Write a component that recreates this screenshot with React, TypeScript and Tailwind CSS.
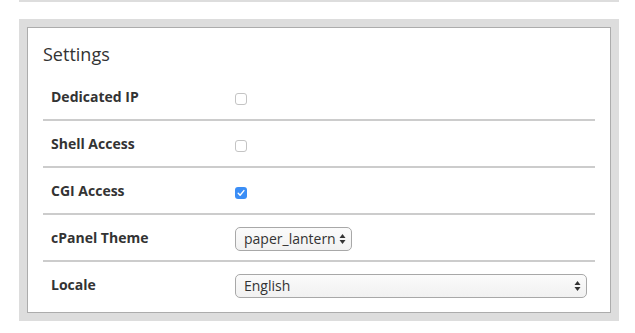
import type { ReactNode } from 'react';

const FONT = { fontFamily: '"Open Sans", "Liberation Sans", sans-serif' };

function Checkbox({ checked }: { checked?: boolean }) {
  if (checked) {
    return (
      <span className="mt-[4px] flex h-[12px] w-[12px] items-center justify-center rounded-[3px] bg-[#3b8ef6]">
        <svg viewBox="0 0 12 12" className="h-[12px] w-[12px]">
          <path d="M3.2 6.3 L5.1 8.3 L8.9 3.6" fill="none" stroke="#fff" strokeWidth="1.4" strokeLinecap="round" strokeLinejoin="round" />
        </svg>
      </span>
    );
  }
  return <span className="mt-[4px] block h-[12px] w-[12px] rounded-[3px] border border-[#c4c4c4] bg-white" />;
}

function Arrows() {
  return (
    <svg viewBox="0 0 7 12" className="h-[12px] w-[7px]">
      <path d="M3.5 1 L6.5 5 L0.5 5 Z" fill="#333" />
      <path d="M3.5 11 L6.5 7 L0.5 7 Z" fill="#333" />
    </svg>
  );
}

function FakeSelect({ value, wide }: { value: string; wide?: boolean }) {
  return (
    <div
      className={`mt-[3px] flex h-[24px] items-center justify-between rounded-[5px] border border-[#a8a8a8] bg-gradient-to-b from-[#fbfbfb] to-[#f1f1f1] pl-[8px] pr-[5px] text-[14px] text-[#333] ${
        wide ? 'w-[352px]' : 'w-[117px]'
      }`}
    >
      <span className="leading-[20px]">{value}</span>
      <Arrows />
    </div>
  );
}

function Row({ label, first, children }: { label: string; first?: boolean; children: ReactNode }) {
  return (
    <div className={`flex items-center ${first ? 'h-[45px]' : 'h-[47px] border-t-2 border-[#cccccc]'}`}>
      <div className="w-[184px] pl-[8px] text-[14px] font-bold text-[#333]">{label}</div>
      <div className="flex flex-1 items-center pl-[8px]">{children}</div>
    </div>
  );
}

export default function App() {
  return (
    <div className="min-h-[333px] w-[635px] bg-white" style={FONT}>
      <div className="ml-[19px] h-[2px] w-[600px] bg-[#dddddd]" />
      <div className="ml-[19px] mt-[17px] h-[302px] w-[600px] bg-[#dddddd] p-[8px]">
        <div className="h-[286px] border border-[#acacac] bg-white px-[15px] pt-[16px]">
          <h2 className="mb-[10px] text-[18px] leading-[20px] font-normal text-[#333]">Settings</h2>
          <Row label="Dedicated IP" first>
            <Checkbox />
          </Row>
          <Row label="Shell Access">
            <Checkbox />
          </Row>
          <Row label="CGI Access">
            <Checkbox checked />
          </Row>
          <Row label="cPanel Theme">
            <FakeSelect value="paper_lantern" />
          </Row>
          <Row label="Locale">
            <FakeSelect value="English" wide />
          </Row>
        </div>
      </div>
    </div>
  );
}
